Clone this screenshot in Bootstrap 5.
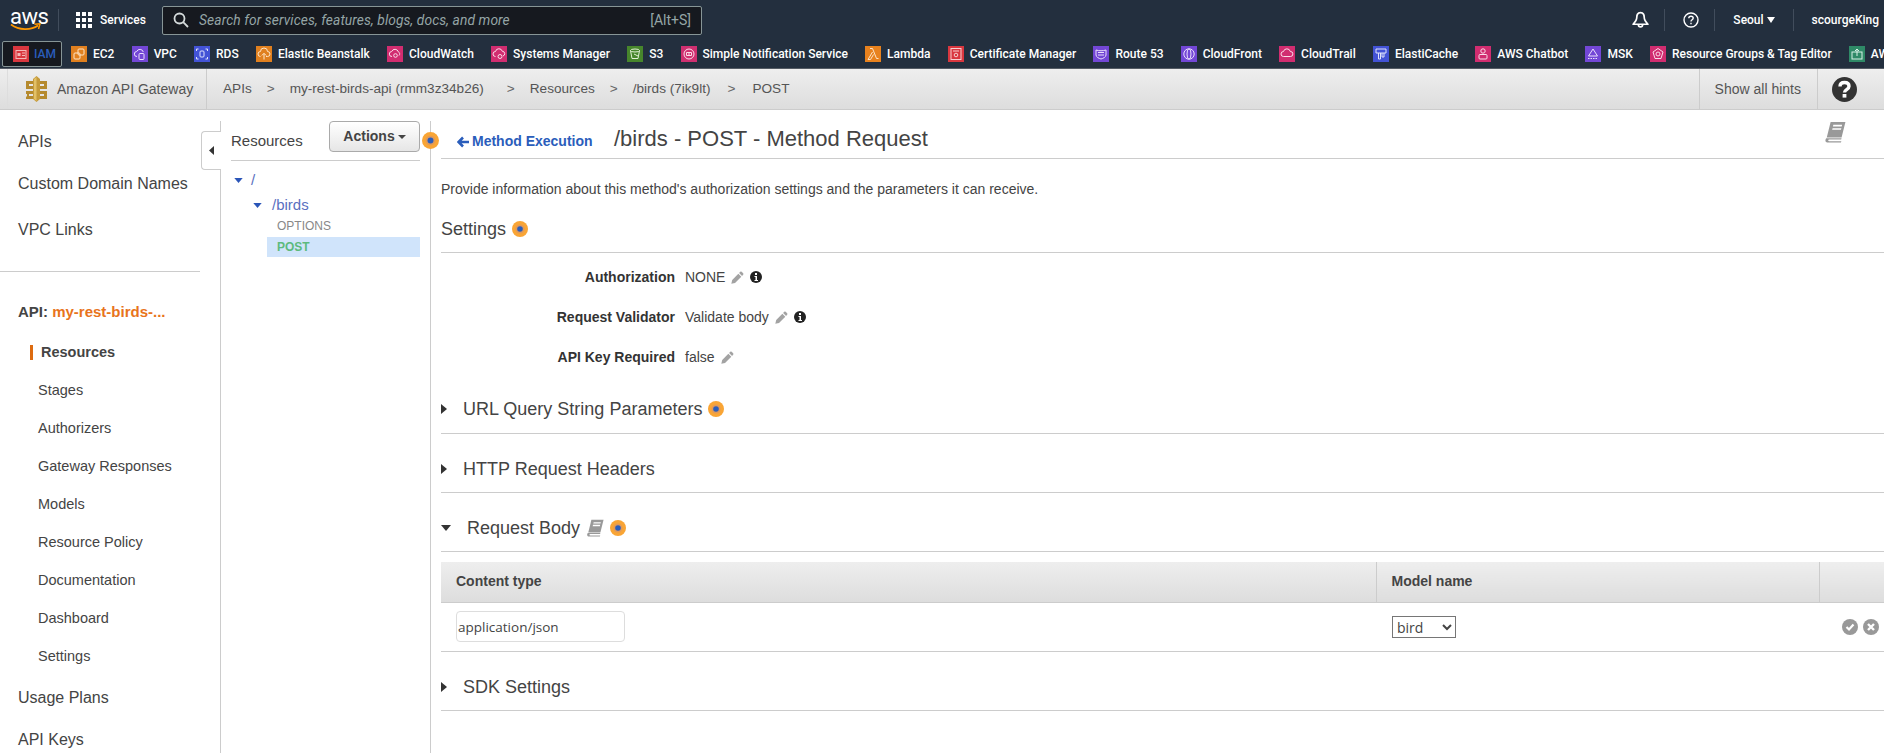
<!DOCTYPE html>
<html lang="en">
<head>
<meta charset="utf-8">
<title>Amazon API Gateway</title>
<link href="https://cdn.jsdelivr.net/npm/bootstrap@5.3.0/dist/css/bootstrap.min.css" rel="stylesheet">
<style>
html,body{height:753px;overflow:hidden;background:#fff}
body{font-family:"Liberation Sans",Arial,sans-serif;color:#444;font-size:14px}
a{text-decoration:none}
.aws-top{height:40px;background:#232f3e;color:#fff;font-family:Roboto,sans-serif;font-size:12px;font-weight:500;padding-left:10px}
.aws-logo{width:32px;line-height:1}
.aws-word{display:block;font-size:22px;font-weight:400;letter-spacing:-.5px;line-height:15px;height:17px;text-align:center}
.aws-logo svg{display:block;margin-top:-3px}
.top-sep{width:1px;height:22px;background:#414d5c}
.svc-link{margin-left:17px;gap:8px;width:86px}
.search-box{width:540px;height:29px;background:#16191f;border:1px solid #879596;border-radius:2px;padding:0 10px;color:#95a5a6;font-weight:400;font-size:14px}
.search-hint{font-style:italic;margin-left:10px;font-size:13.8px;letter-spacing:.1px}
.top-right{padding-right:5px}
.top-g15{margin-left:15px}
.top-g18{margin-left:18px}
.seoul-gap{margin-left:3px}
.fav-bar{height:29px;background:#232f3e;color:#fff;font-family:Roboto,sans-serif;font-size:12px;font-weight:500;gap:17.2px;padding-left:2px;white-space:nowrap;overflow:hidden;border-bottom:1px solid #545b64}
.fav-item{gap:6px;flex:none}
.fav-active{width:60px;height:26px;margin-right:-8.2px;padding-left:10px;border:1px solid #879596;border-radius:2px;background:#16191f;color:#2a5dbb;gap:5px}
.fav-ico{width:16px;height:16px;flex:none;display:block}
.gw-bar{height:41px;background:linear-gradient(#eee,#ddd);border-bottom:1px solid #ccc;color:#555;padding-left:7px;font-size:14px}
.gw-brand{gap:9px;padding-left:17px;width:200px;height:100%;border-right:1px solid #ccc;border-left:1px solid #ddd}
.gw-crumbs{padding-left:16px;white-space:nowrap;font-size:13.6px}
.gw-gt{margin:0 15px;color:#666}
.gw-gt-wide{margin-left:23px}
.gw-gt-last{margin-left:17px;margin-right:17px}
.gw-right{height:100%}
.gw-hints{height:100%;padding:0 16px 0 15px;border-left:1px solid #ccc;border-right:1px solid #ccc}
.gw-help{width:66px;padding-left:14px}
.body-wrap{height:643px;overflow:hidden}
.left-nav{width:221px;flex:none;margin-top:11px;padding-top:11px;border-right:1px solid #ccc;height:632px;position:relative;color:#444}
.nav-top{padding-left:18px;font-size:16px;line-height:20px;white-space:nowrap}
.nav-gap1{margin-top:22px}
.nav-gap2{margin-top:26px}
.nav-rule{width:200px;height:1px;background:#ccc;margin:31px 0 30px}
.nav-api{padding-left:18px;font-size:15px;font-weight:700;line-height:20px;margin-bottom:11px;white-space:nowrap}
.nav-api span{color:#e8741c}
.nav-sub{padding-left:38px;line-height:38px;font-size:14.5px;white-space:nowrap}
.nav-cur{font-weight:700;padding-left:41px;position:relative}
.nav-cur::before{content:"";position:absolute;left:30px;top:12px;width:3px;height:15px;background:#dd6b10}
.nav-after1{margin-top:13px}
.nav-after2{margin-top:22px}
.nav-tab{position:absolute;left:201px;top:10px;width:20px;height:39px;background:#fff;border:1px solid #ccc;border-right:0;border-radius:4px 0 0 4px}
.res-panel{width:210px;flex:none;margin-top:11px;height:632px;border-right:1px solid #ccc;padding:0 10px;position:relative}
.res-head{height:40px;border-bottom:1px solid #ccc;font-size:15px;padding-bottom:8px}
.res-label{margin-top:10px}
.act-btn{width:91px;height:31px;padding:0;border:1px solid #aaa;border-radius:4px;background:linear-gradient(#fff,#e6e6e6);color:#444;font-weight:700;font-size:14px;gap:3px;box-shadow:none}
.res-tree{font-size:15px;color:#5a6fc0;position:relative}
.tree-a{height:24px;margin-top:7px;gap:8px;padding-left:3px}
.tree-b{height:24px;gap:10px;padding-left:22px;margin-top:1px}
.tree-c{height:20px;padding-left:46px;font-size:12px;color:#888;margin-top:-1px}
.tree-d{height:20px;margin-left:36px;padding-left:10px;font-size:12px;font-weight:700;color:#5dba7d;background:#d0e4fb;margin-top:1px}
.hint-ico{display:block;flex:none}
.hint-edge{position:absolute;right:-9px;top:11px}
.main-pane{flex:1 1 auto;min-width:0;padding-left:10px;margin-top:9px}
.title-row{height:40px;border-bottom:1px solid #ccc}
.back-link{color:#2a5dbb;font-weight:700;font-size:14px;margin-left:16px;gap:3px;margin-top:6px;width:157px}
.title-text{font-size:22px;color:#444;font-weight:400;margin:2px 0 0;line-height:1.2}
.intro{font-size:14px;line-height:20px;margin:20px 0 0;color:#444}
.sec-h{font-size:18px;line-height:24px;color:#444;border-bottom:1px solid #ccc;padding-top:23px;padding-bottom:11px;gap:6px;font-weight:400;margin:0}
.sec-first{padding-top:18px;padding-bottom:11px}
.sec-url{padding-top:20px;padding-bottom:12px}
.sec-arrow{margin-right:10px}
.sec-open{margin-right:10px}
.set-list{margin-top:4px}
.set-row{height:40px;gap:10px}
.set-label{width:234px;text-align:right;font-weight:700;font-size:14px;color:#333}
.set-val{gap:6px;font-size:14px;color:#444}
.top-book{right:38px;top:2px}
.table-wrap{margin-top:10px}
.bird-table{table-layout:fixed;width:100%;margin:0}
.bird-table th{height:40px;padding:0 0 0 15px;background:linear-gradient(#eee,#ddd);border-bottom:1px solid #ccc;border-right:1px solid #ccc;font-size:14px;color:#444;vertical-align:middle;box-shadow:none}
.bird-table th:last-child{border-right:0}
.bird-table td{height:49px;padding:0 0 0 15px;border-bottom:1px solid #ccc;vertical-align:middle;background:transparent;box-shadow:none}
.col-a{width:935px}
.col-b{width:443px}
.type-input{width:169px;height:31px;border:1px solid #ddd;border-radius:4px;padding:0 1px;font-family:"Open Sans",sans-serif;font-size:13.500px;color:#444;display:block}
.model-select{width:64px;height:22px;margin-left:1px;font-family:"Open Sans",sans-serif;font-size:14px;color:#444;border:1px solid #767676;background:#fff;border-radius:0;display:block}
.row-acts{gap:5px;justify-content:flex-end;padding-right:5px}
</style>
</head>
<body>
<svg width="0" height="0" class="position-absolute">
<defs>
<symbol id="hint" viewBox="0 0 16 16"><circle cx="8" cy="8" r="8" fill="#f9a535"/><circle cx="8" cy="8" r="4.500" fill="#e0995a"/><circle cx="8" cy="8" r="2.800" fill="#2a5dbb"/></symbol>
<symbol id="book" viewBox="0 0 20 20"><path fill="#999" d="M6 .8h13.500l-3.500 14.200H2.500z"/><path fill="#fff" d="M8.500 3.500h8l-.4 1.500h-8zM7.800 6.500h8l-.4 1.500h-8z"/><path fill="#999" d="M2 15.600h14l-.4 1.200H4.800c-1.300 0-1.300 1.500 0 1.500h11l-.4 1.200H3.500C1 19.500.8 17.200 2 15.600z"/></symbol>
<symbol id="pencil" viewBox="0 0 12 12"><path fill="#a3a3a3" d="M8.500.8a1 1 0 0 1 1.400 0l1.300 1.300a1 1 0 0 1 0 1.400l-1 1-2.700-2.700zM6.800 2.500l2.700 2.700-5.800 5.800-3.400.8.800-3.500z"/></symbol>
<symbol id="info" viewBox="0 0 12 12"><circle cx="6" cy="6" r="6" fill="#222"/><path fill="#fff" d="M5 2h2v2H5zM4.500 5H7v4h1v1H4.500V9h1V6h-1z"/></symbol>
<symbol id="tri-right" viewBox="0 0 6 10"><path fill="#333" d="M0 0l6 5-6 5z"/></symbol>
<symbol id="tri-down" viewBox="0 0 10 6"><path fill="#333" d="M0 0h10L5 6z"/></symbol>
<symbol id="tri-blue" viewBox="0 0 10 6"><path fill="#2a55b8" d="M0 0h10L5 6z"/></symbol>
</defs>
</svg>

<header class="aws-top d-flex align-items-center">
  <div class="aws-logo"><span class="aws-word">aws</span>
    <svg width="32" height="9" viewBox="0 0 32 9"><path d="M1 1.500C9 7.500 21 7.500 28 2.500" fill="none" stroke="#f90" stroke-width="1.700"/><path d="M24.500 1.200 30 .8 28.500 6" fill="none" stroke="#f90" stroke-width="1.500"/></svg></div>
  <span class="top-sep ms-3"></span>
  <a class="svc-link d-flex align-items-center text-white" href="#">
    <svg width="16" height="16" viewBox="0 0 16 16" fill="#fff"><path d="M0 0h4v4H0zM6 0h4v4H6zM12 0h4v4h-4zM0 6h4v4H0zM6 6h4v4H6zM12 6h4v4h-4zM0 12h4v4H0zM6 12h4v4H6zM12 12h4v4h-4z"/></svg>
    <span>Services</span></a>
  <div class="search-box d-flex align-items-center">
    <svg width="16" height="16" viewBox="0 0 16 16" fill="none" stroke="#d5dbdb" stroke-width="1.800"><circle cx="6.500" cy="6.500" r="5"/><path d="M10.200 10.200 15 15"/></svg>
    <span class="search-hint flex-grow-1">Search for services, features, blogs, docs, and more</span>
    <span>[Alt+S]</span>
  </div>
  <div class="top-right d-flex align-items-center ms-auto">
    <svg width="17" height="18" viewBox="0 0 16 17" fill="none" stroke="#fff" stroke-width="1.600"><path d="M8 1.500C5 1.500 4.500 4 4.500 6c0 3-1.500 4.500-3.500 6.500h14c-2-2-3.500-3.500-3.500-6.500 0-2-.5-4.500-3.500-4.500z" stroke-linejoin="round"/><path d="M6 13a2 2 0 0 0 4 0"/></svg>
    <span class="top-sep top-g15"></span>
    <svg class="top-g18" width="16" height="16" viewBox="0 0 16 16" fill="none" stroke="#fff" stroke-width="1.400"><circle cx="8" cy="8" r="7"/><path d="M5.800 6.200C5.800 4.800 6.900 4.200 8 4.200c1.200 0 2.200.7 2.200 1.900 0 1.700-2.200 1.600-2.200 3.400"/><path d="M8 10.800v1.400"/></svg>
    <span class="top-sep top-g15"></span>
    <span class="top-g18">Seoul</span>
    <svg class="seoul-gap" width="8" height="6" viewBox="0 0 8 6" fill="#fff"><path d="M0 0h8L4 6z"/></svg>
    <span class="top-sep top-g18"></span>
    <span class="top-g18">scourgeKing</span>
  </div>
</header>

<nav class="fav-bar d-flex align-items-center">
  <a class="fav-item fav-active d-flex align-items-center" href="#"><svg class="fav-ico" viewBox="0 0 16 16"><rect width="16" height="16" fill="#d9373f"/><rect x="3" y="4.500" width="10" height="8" fill="none" stroke="#f4b7b7"/><rect x="4.500" y="7" width="3" height="3" fill="#f4b7b7"/><path d="M9 7h3M9 9.500h3" stroke="#f4b7b7"/></svg><span>IAM</span></a>
  <a class="fav-item d-flex align-items-center text-white" href="#"><svg class="fav-ico" viewBox="0 0 16 16"><rect width="16" height="16" fill="#e0801f"/><rect x="3" y="7" width="6" height="6" rx="1" fill="none" stroke="#fde5c8"/><rect x="7" y="3" width="6" height="6" rx="1" fill="none" stroke="#fde5c8"/></svg><span>EC2</span></a>
  <a class="fav-item d-flex align-items-center text-white" href="#"><svg class="fav-ico" viewBox="0 0 16 16"><rect width="16" height="16" fill="#7347d6"/><path d="M5 10.500a2.500 2.500 0 0 1-.3-5 3.500 3.500 0 0 1 6.600.5" fill="none" stroke="#eadffc"/><rect x="7" y="7.500" width="5" height="6" rx="1" fill="none" stroke="#eadffc"/></svg><span>VPC</span></a>
  <a class="fav-item d-flex align-items-center text-white" href="#"><svg class="fav-ico" viewBox="0 0 16 16"><rect width="16" height="16" fill="#4353d6"/><rect x="6" y="5" width="4" height="6" rx="1" fill="none" stroke="#dfe3fb"/><path d="M2.500 3h2M2.500 3v2M13.500 3h-2M13.500 3v2M2.500 13h2M2.500 13v-2M13.500 13h-2M13.500 13v-2" stroke="#dfe3fb"/></svg><span>RDS</span></a>
  <a class="fav-item d-flex align-items-center text-white" href="#"><svg class="fav-ico" viewBox="0 0 16 16"><rect width="16" height="16" fill="#e0801f"/><path d="M4.500 10.500a2.500 2.500 0 0 1 0-5 3.500 3.500 0 0 1 7 0 2.500 2.500 0 0 1 0 5H10M8 13.500V7.500M5.800 9.500 8 7.300l2.200 2.200" fill="none" stroke="#fde5c8"/></svg><span>Elastic Beanstalk</span></a>
  <a class="fav-item d-flex align-items-center text-white" href="#"><svg class="fav-ico" viewBox="0 0 16 16"><rect width="16" height="16" fill="#d12d70"/><path d="M5 10.500a2.500 2.500 0 0 1-.3-5 3.500 3.500 0 0 1 6.600.3 2.300 2.300 0 0 1 .7 3.700" fill="none" stroke="#fbdce9"/><circle cx="8.500" cy="9.500" r="1.800" fill="none" stroke="#fbdce9"/></svg><span>CloudWatch</span></a>
  <a class="fav-item d-flex align-items-center text-white" href="#"><svg class="fav-ico" viewBox="0 0 16 16"><rect width="16" height="16" fill="#d12d70"/><path d="M4.500 10.500a2.500 2.500 0 0 1 0-5 3.500 3.500 0 0 1 6.800-.2 2.400 2.400 0 0 1 .7 4.700" fill="none" stroke="#fbdce9"/><circle cx="9" cy="10.500" r="2" fill="none" stroke="#fbdce9"/></svg><span>Systems Manager</span></a>
  <a class="fav-item d-flex align-items-center text-white" href="#"><svg class="fav-ico" viewBox="0 0 16 16"><rect width="16" height="16" fill="#47862c"/><ellipse cx="8" cy="4.500" rx="4.500" ry="1.500" fill="none" stroke="#e0f0d4"/><path d="M3.500 4.500 5 12.500h6l1.500-8M7 8l4 2" fill="none" stroke="#e0f0d4"/></svg><span>S3</span></a>
  <a class="fav-item d-flex align-items-center text-white" href="#"><svg class="fav-ico" viewBox="0 0 16 16"><rect width="16" height="16" fill="#cf2f70"/><circle cx="8" cy="8" r="5" fill="none" stroke="#fbdce9"/><path d="M5.500 6.500h5v3h-5zM8 6.500v3" fill="none" stroke="#fbdce9"/></svg><span>Simple Notification Service</span></a>
  <a class="fav-item d-flex align-items-center text-white" href="#"><svg class="fav-ico" viewBox="0 0 16 16"><rect width="16" height="16" fill="#e8821e"/><path d="M5 2.500h2.500l4 10h2M7.500 6 3 13.500h2.500L8.500 8.500" fill="none" stroke="#fde5c8"/></svg><span>Lambda</span></a>
  <a class="fav-item d-flex align-items-center text-white" href="#"><svg class="fav-ico" viewBox="0 0 16 16"><rect width="16" height="16" fill="#d9373f"/><rect x="3" y="2.500" width="10" height="11" fill="none" stroke="#f7cfcf"/><path d="M5 5h6" stroke="#f7cfcf"/><circle cx="8" cy="9" r="1.800" fill="none" stroke="#f7cfcf"/></svg><span>Certificate Manager</span></a>
  <a class="fav-item d-flex align-items-center text-white" href="#"><svg class="fav-ico" viewBox="0 0 16 16"><rect width="16" height="16" fill="#7347d6"/><path d="M3 4c3 1 7 1 10 0v5c0 2-3 3.500-5 4-2-.5-5-2-5-4z" fill="none" stroke="#eadffc"/><path d="M5 6.500h6M5 9h6" stroke="#eadffc"/></svg><span>Route 53</span></a>
  <a class="fav-item d-flex align-items-center text-white" href="#"><svg class="fav-ico" viewBox="0 0 16 16"><rect width="16" height="16" fill="#7347d6"/><circle cx="8" cy="8" r="5.200" fill="none" stroke="#eadffc"/><ellipse cx="8" cy="8" rx="2" ry="5.200" fill="none" stroke="#eadffc"/></svg><span>CloudFront</span></a>
  <a class="fav-item d-flex align-items-center text-white" href="#"><svg class="fav-ico" viewBox="0 0 16 16"><rect width="16" height="16" fill="#d12d70"/><path d="M4.500 10.500a2.500 2.500 0 0 1 0-5 3.500 3.500 0 0 1 6.800 0 2.500 2.500 0 0 1 .2 5z" fill="none" stroke="#fbdce9"/></svg><span>CloudTrail</span></a>
  <a class="fav-item d-flex align-items-center text-white" href="#"><svg class="fav-ico" viewBox="0 0 16 16"><rect width="16" height="16" fill="#4353d6"/><path d="M3 3h10v4H3zM5.500 7v6h2V7M9 7v4h2V7" fill="none" stroke="#dfe3fb"/></svg><span>ElastiCache</span></a>
  <a class="fav-item d-flex align-items-center text-white" href="#"><svg class="fav-ico" viewBox="0 0 16 16"><rect width="16" height="16" fill="#d12d70"/><circle cx="8" cy="5" r="2.200" fill="none" stroke="#fbdce9"/><rect x="4" y="8.500" width="8" height="4.500" rx="1" fill="none" stroke="#fbdce9"/></svg><span>AWS Chatbot</span></a>
  <a class="fav-item d-flex align-items-center text-white" href="#"><svg class="fav-ico" viewBox="0 0 16 16"><rect width="16" height="16" fill="#7347d6"/><path d="M8 3 12.500 10h-9z" fill="none" stroke="#eadffc"/><path d="M3 12.500h10" stroke="#eadffc" stroke-dasharray="1.500 1"/></svg><span>MSK</span></a>
  <a class="fav-item d-flex align-items-center text-white" href="#"><svg class="fav-ico" viewBox="0 0 16 16"><rect width="16" height="16" fill="#d12d70"/><path d="M8 2.500 13 6l-2 6.500H5L3 6z" fill="none" stroke="#fbdce9"/><circle cx="8" cy="8" r="2" fill="none" stroke="#fbdce9"/></svg><span>Resource Groups &amp; Tag Editor</span></a>
  <a class="fav-item d-flex align-items-center text-white" href="#"><svg class="fav-ico" viewBox="0 0 16 16"><rect width="16" height="16" fill="#2f8a67"/><rect x="3" y="6" width="10" height="7" fill="none" stroke="#d8f0e6"/><path d="M8 10V3M6 5l2-2 2 2" fill="none" stroke="#d8f0e6"/></svg><span>AWS</span></a>
</nav>

<div class="gw-bar d-flex align-items-center">
  <div class="gw-brand d-flex align-items-center">
    <svg width="23" height="26" viewBox="0 0 23 26"><path fill="#c59b3c" d="M11.500 0 15 3v20l-3.500 3L8 23V3z"/><path fill="#b58a2e" d="M1 5h7v3H4v2h4v3H1zM22 5h-7v3h4v2h-4v3h7zM1 15h7v3H4v2h4v3H1v-2.500h1V18H1zM22 15h-7v3h4v2h-4v3h7z"/><path fill="#e2c067" d="M11.500 1v24L9 23V3z"/></svg>
    <span class="text-nowrap">Amazon API Gateway</span>
  </div>
  <div class="gw-crumbs d-flex align-items-center">
    <span>APIs</span><span class="gw-gt">&gt;</span><span>my-rest-birds-api (rmm3z34b26)</span><span class="gw-gt gw-gt-wide">&gt;</span><span>Resources</span><span class="gw-gt">&gt;</span><span>/birds (7ik9lt)</span><span class="gw-gt gw-gt-last">&gt;</span><span>POST</span>
  </div>
  <div class="gw-right d-flex align-items-center ms-auto">
    <span class="gw-hints d-flex align-items-center">Show all hints</span>
    <span class="gw-help d-flex align-items-center">
      <svg width="25" height="25" viewBox="0 0 25 25"><circle cx="12.500" cy="12.500" r="12.500" fill="#333"/><path fill="none" stroke="#fff" stroke-width="3.400" d="M8 9.500c0-2.800 2-4 4.500-4s4.500 1.300 4.500 3.800c0 3.400-4.500 3.200-4.500 6.200"/><rect x="10.600" y="17" width="3.800" height="3.600" fill="#fff"/></svg>
    </span>
  </div>
</div>

<div class="body-wrap d-flex">
  <aside class="left-nav">
    <a class="nav-top d-block text-reset" href="#">APIs</a>
    <a class="nav-top nav-gap1 d-block text-reset" href="#">Custom Domain Names</a>
    <a class="nav-top nav-gap2 d-block text-reset" href="#">VPC Links</a>
    <div class="nav-rule"></div>
    <div class="nav-api">API: <span>my-rest-birds-...</span></div>
    <a class="nav-sub nav-cur d-block text-reset" href="#">Resources</a>
    <a class="nav-sub d-block text-reset" href="#">Stages</a>
    <a class="nav-sub d-block text-reset" href="#">Authorizers</a>
    <a class="nav-sub d-block text-reset" href="#">Gateway Responses</a>
    <a class="nav-sub d-block text-reset" href="#">Models</a>
    <a class="nav-sub d-block text-reset" href="#">Resource Policy</a>
    <a class="nav-sub d-block text-reset" href="#">Documentation</a>
    <a class="nav-sub d-block text-reset" href="#">Dashboard</a>
    <a class="nav-sub d-block text-reset" href="#">Settings</a>
    <a class="nav-top nav-after1 d-block text-reset" href="#">Usage Plans</a>
    <a class="nav-top nav-after2 d-block text-reset" href="#">API Keys</a>
    <div class="nav-tab d-flex align-items-center justify-content-center">
      <svg width="5" height="9" viewBox="0 0 5 9"><path fill="#333" d="M5 0v9L0 4.500z"/></svg>
    </div>
  </aside>

  <section class="res-panel">
    <div class="res-head d-flex align-items-center justify-content-between">
      <span class="res-label">Resources</span>
      <button class="act-btn btn d-flex align-items-center justify-content-center" type="button">Actions <svg width="8" height="4" viewBox="0 0 8 4"><path fill="#444" d="M0 0h8L4 4z"/></svg></button>
    </div>
    <svg class="hint-ico hint-edge" width="17" height="17"><use href="#hint"/></svg>
    <div class="res-tree">
      <div class="tree-a d-flex align-items-center"><svg width="9" height="5"><use href="#tri-blue"/></svg><span>/</span></div>
      <div class="tree-b d-flex align-items-center"><svg width="9" height="5"><use href="#tri-blue"/></svg><span>/birds</span></div>
      <div class="tree-c d-flex align-items-center">OPTIONS</div>
      <div class="tree-d d-flex align-items-center">POST</div>
    </div>
  </section>

  <main class="main-pane">
    <div class="title-row d-flex align-items-center position-relative">
      <a class="back-link d-flex align-items-center" href="#"><svg width="12" height="12" viewBox="0 0 12 12" fill="none" stroke="#2a5dbb" stroke-width="2.600"><path d="M6 1.500 1.500 6 6 10.500M2 6h10"/></svg><span>Method Execution</span></a>
      <h1 class="title-text">/birds - POST - Method Request</h1>
      <svg class="position-absolute top-book" width="22" height="22"><use href="#book"/></svg>
    </div>
    <p class="intro">Provide information about this method's authorization settings and the parameters it can receive.</p>
    <h2 class="sec-h sec-first d-flex align-items-center">Settings <svg class="hint-ico" width="16" height="16"><use href="#hint"/></svg></h2>
    <div class="set-list">
      <div class="set-row d-flex align-items-center"><span class="set-label">Authorization</span><span class="set-val d-flex align-items-center">NONE <svg width="13" height="13"><use href="#pencil"/></svg><svg width="12" height="12"><use href="#info"/></svg></span></div>
      <div class="set-row d-flex align-items-center"><span class="set-label">Request Validator</span><span class="set-val d-flex align-items-center">Validate body <svg width="13" height="13"><use href="#pencil"/></svg><svg width="12" height="12"><use href="#info"/></svg></span></div>
      <div class="set-row d-flex align-items-center"><span class="set-label">API Key Required</span><span class="set-val d-flex align-items-center">false <svg width="13" height="13"><use href="#pencil"/></svg></span></div>
    </div>
    <h2 class="sec-h sec-url d-flex align-items-center"><svg class="sec-arrow" width="6" height="10"><use href="#tri-right"/></svg><span>URL Query String Parameters</span> <svg class="hint-ico" width="16" height="16"><use href="#hint"/></svg></h2>
    <h2 class="sec-h d-flex align-items-center"><svg class="sec-arrow" width="6" height="10"><use href="#tri-right"/></svg><span>HTTP Request Headers</span></h2>
    <h2 class="sec-h d-flex align-items-center"><svg class="sec-open" width="10" height="6"><use href="#tri-down"/></svg><span>Request Body</span> <svg width="18" height="18"><use href="#book"/></svg><svg class="hint-ico" width="16" height="16"><use href="#hint"/></svg></h2>
    <div class="table-wrap">
      <table class="table bird-table">
        <thead><tr><th class="col-a">Content type</th><th class="col-b">Model name</th><th></th></tr></thead>
        <tbody><tr>
          <td><input class="type-input" type="text" value="application/json" aria-label="Content type"></td>
          <td><select class="model-select" aria-label="Model name"><option>bird</option></select></td>
          <td>
            <div class="row-acts d-flex align-items-center">
              <svg width="16" height="16" viewBox="0 0 16 16"><circle cx="8" cy="8" r="8" fill="#999"/><path d="M4.500 8 7 10.500 11.500 5.500" fill="none" stroke="#fff" stroke-width="2.200"/></svg>
              <svg width="16" height="16" viewBox="0 0 16 16"><circle cx="8" cy="8" r="8" fill="#999"/><path d="M5 5l6 6M11 5l-6 6" fill="none" stroke="#fff" stroke-width="2.400"/></svg>
            </div>
          </td>
        </tr></tbody>
      </table>
    </div>
    <h2 class="sec-h d-flex align-items-center"><svg class="sec-arrow" width="6" height="10"><use href="#tri-right"/></svg><span>SDK Settings</span></h2>
  </main>
</div>
</body>
</html>
